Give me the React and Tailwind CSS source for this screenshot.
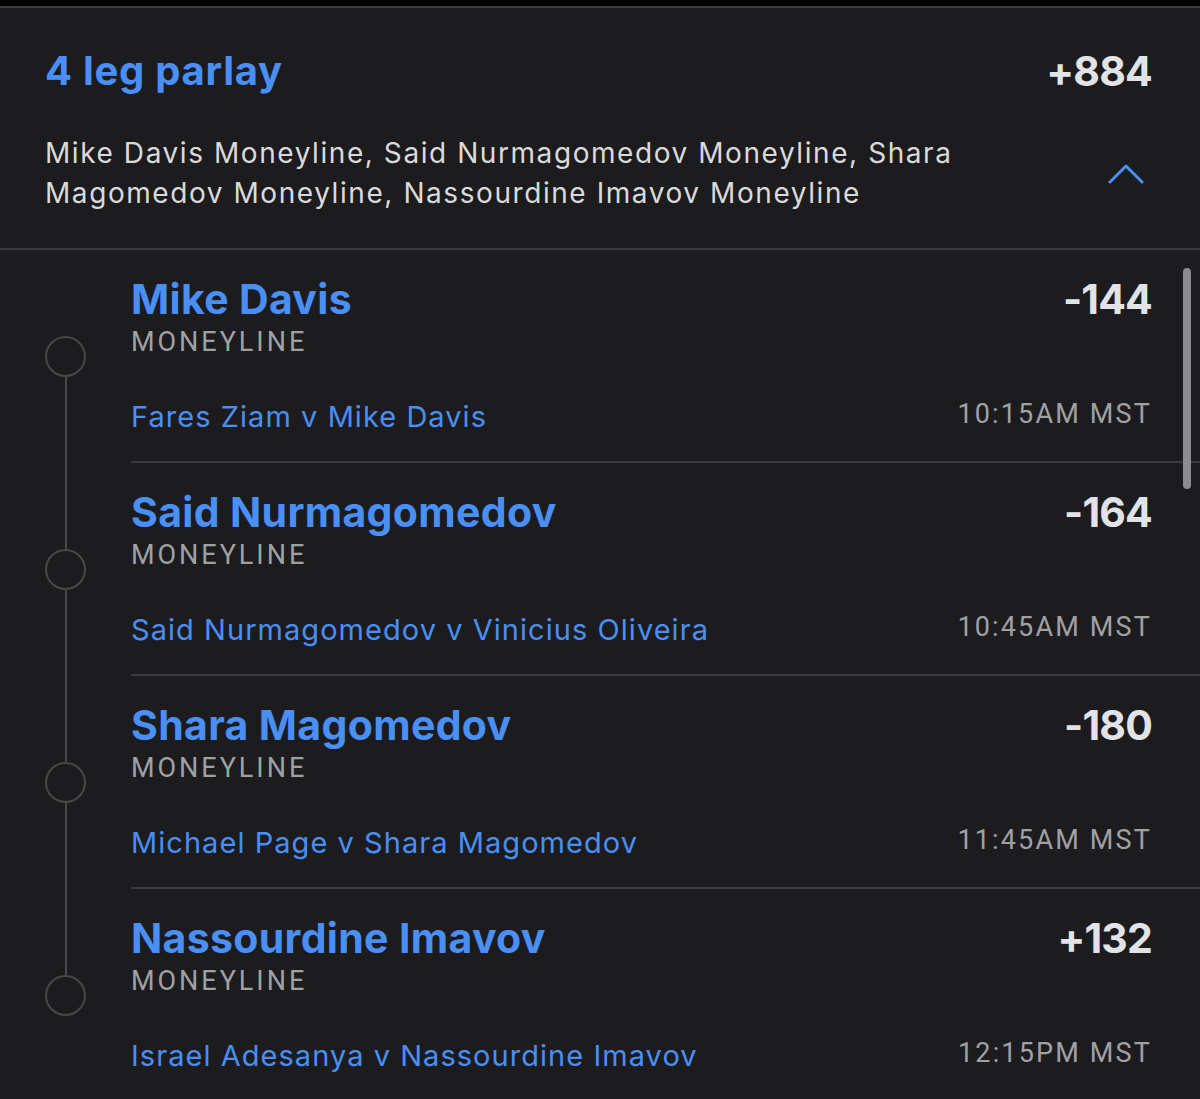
import React from "react";

const legs = [
  { name: "Mike Davis", odds: "-144", matchup: "Fares Ziam v Mike Davis", time: "10:15AM MST" },
  { name: "Said Nurmagomedov", odds: "-164", matchup: "Said Nurmagomedov v Vinicius Oliveira", time: "10:45AM MST" },
  { name: "Shara Magomedov", odds: "-180", matchup: "Michael Page v Shara Magomedov", time: "11:45AM MST" },
  { name: "Nassourdine Imavov", odds: "+132", matchup: "Israel Adesanya v Nassourdine Imavov", time: "12:15PM MST" },
];

const sans = { fontFamily: "Inter, Lato, 'Noto Sans', sans-serif" };
const label = { fontFamily: "Roboto, 'Liberation Sans', sans-serif" };

function Leg({ leg, first, last }) {
  return (
    <div className="flex">
      {/* timeline rail with node */}
      <div className="w-[131px] shrink-0 flex flex-col items-center pl-[1px] pr-[1px]">
        <div className={`w-[2px] flex-1 ${first ? "bg-transparent" : "bg-[#48484a]"}`} />
        <div className="w-[41px] h-[41px] rounded-full border-2 border-[#48484a] shrink-0" />
        <div className={`w-[2px] flex-1 ${last ? "bg-transparent" : "bg-[#48484a]"}`} />
      </div>
      <div className={`flex-1 h-[213px] pr-[48px] pt-[25px] ${last ? "" : "border-b-2 border-[#3a3a3c]"}`}>
        <div className="flex items-start justify-between">
          <div className="text-[41px] leading-[48px] font-bold tracking-[0.008em] text-[#4a8ff4]" style={sans}>
            {leg.name}
          </div>
          <div className="text-[41px] leading-[48px] font-bold tracking-[-0.02em] text-[#e2e3e7]" style={sans}>
            {leg.odds}
          </div>
        </div>
        <div className="mt-[3px] text-[27px] leading-[32px] tracking-[0.11em] text-[#a1a1a4]" style={label}>
          MONEYLINE
        </div>
        <div className="mt-[40px] flex items-center justify-between">
          <div className="text-[29px] leading-[36px] tracking-[0.036em] text-[#4a8ff4]" style={sans}>
            {leg.matchup}
          </div>
          <div className="text-[27px] leading-[32px] tracking-[0.08em] text-[#a1a1a4] mb-[6px]" style={label}>
            {leg.time}
          </div>
        </div>
      </div>
    </div>
  );
}

export default function App() {
  return (
    <div className="w-[1200px] h-[1099px] overflow-hidden bg-[#1c1c1e] relative">
      <div className="h-[6px] bg-black" />
      <div className="h-[2px] bg-[#3d3d3f]" />

      {/* parlay summary */}
      <div className="pl-[45px] pr-[48px] pt-[40px] pb-[35px] border-b-2 border-[#3a3a3c]">
        <div className="flex items-start justify-between">
          <div className="text-[40px] leading-[46px] font-bold tracking-[0.018em] text-[#4a8ff4]" style={sans}>
            4 leg parlay
          </div>
          <div className="text-[41px] leading-[46px] font-bold tracking-[-0.02em] text-[#e2e3e7]" style={sans}>
            +884
          </div>
        </div>
        <div className="mt-[39px] flex items-center justify-between">
          <div className="text-[28px] leading-[40px] tracking-[0.056em] text-[#dadadc]" style={sans}>
            Mike Davis Moneyline, Said Nurmagomedov Moneyline, Shara
            <br />
            Magomedov Moneyline, Nassourdine Imavov Moneyline
          </div>
          <svg width="36" height="22" viewBox="0 0 36 22" className="mr-[8px] mt-[2px]">
            <polyline
              points="2,19 18,3 34,19"
              fill="none"
              stroke="#4a8ff4"
              strokeWidth="3"
              strokeLinecap="round"
              strokeLinejoin="round"
            />
          </svg>
        </div>
      </div>

      {/* legs */}
      <div>
        {legs.map((leg, i) => (
          <Leg key={leg.name} leg={leg} first={i === 0} last={i === legs.length - 1} />
        ))}
      </div>

      {/* scroll indicator */}
      <div className="absolute left-[1183px] top-[268px] w-[8px] h-[221px] rounded-full bg-[#8d8d90]" />
    </div>
  );
}
